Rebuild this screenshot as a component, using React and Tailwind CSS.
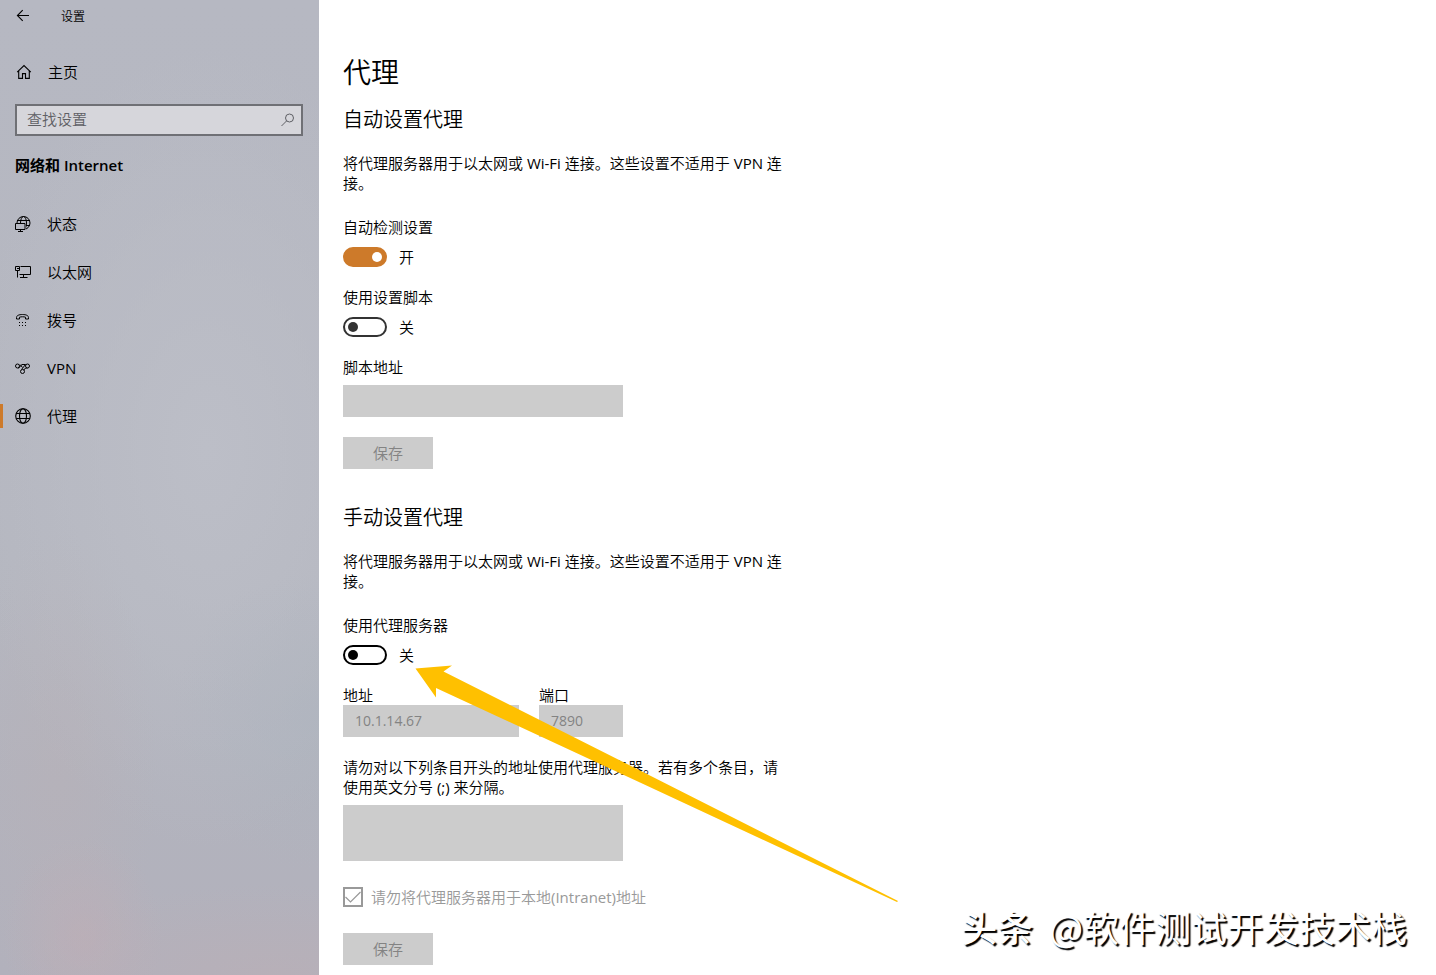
import React, { useState } from 'react';

const HomeIcon = () => (
  <svg className="h-4 w-4" viewBox="0 0 16 16" fill="none" stroke="currentColor" strokeWidth="1.1" aria-hidden="true">
    <path d="M1.2 8.2 8 1.6l6.8 6.6M2.7 7v7.4h3.8V9.6h3v4.8h3.8V7" />
  </svg>
);

const StatusIcon = () => (
  <svg className="h-4 w-4" viewBox="0 0 16 16" fill="none" stroke="currentColor" aria-hidden="true">
    <clipPath id="globe-part">
      <path d="M0 0h16v16h-5V7H0z" />
    </clipPath>
    <g clipPath="url(#globe-part)">
      <circle cx="8.5" cy="7" r="6.5" />
      <ellipse cx="8.5" cy="7" rx="3" ry="6.5" />
      <path d="M2 4.5h13M2 9.5h13" />
    </g>
    <path d="M.5 7.5h9.5v6H.5zM5.5 13.5v2M3 15.5h5" />
  </svg>
);

const EthernetIcon = () => (
  <svg className="h-4 w-4" viewBox="0 0 16 16" fill="none" stroke="currentColor" aria-hidden="true">
    <path d="M5.5 2.5h10v8h-11M.5 2.5h4v4h-4zM2.5 6.5v7M8.5 10.5v3M5 13.5h7.5" />
    <path d="M2 4.5h2" />
  </svg>
);

const DialUpIcon = () => (
  <svg className="h-4 w-4" viewBox="0 0 16 16" fill="none" stroke="currentColor" aria-hidden="true">
    <path d="M1.5 5.5c0-2 2.500-3 6-3s6 1 6 3v1.500h-3V5.200c-1.800-.6-4.200-.6-6 0V7h-3z" />
    <path d="M4 10.5h1M7 10.5h1M10 10.5h1M4 13.5h1M7 13.5h1M10 13.5h1" />
  </svg>
);

const VpnIcon = () => (
  <svg className="h-4 w-4" viewBox="0 0 16 16" fill="none" stroke="currentColor" aria-hidden="true">
    <circle cx="2.5" cy="6" r="2" />
    <circle cx="7.5" cy="11.5" r="2" />
    <circle cx="12.5" cy="6" r="2" />
    <path d="M3 8c2 .2 2.500-2.800 4-3.500h3.500l-4 5M5 4.500l2.500 3M9 10c.2-1.500 1.500-2 3.500-2" />
  </svg>
);

const GlobeIcon = () => (
  <svg className="h-4 w-4" viewBox="0 0 16 16" fill="none" stroke="currentColor" strokeWidth="1.1" aria-hidden="true">
    <circle cx="8" cy="8" r="7.3" />
    <ellipse cx="8" cy="8" rx="3.5" ry="7.3" />
    <path d="M1.2 5.5h13.6M1.2 10.5h13.6" />
  </svg>
);

const navItems = [
  { label: '状态', icon: StatusIcon },
  { label: '以太网', icon: EthernetIcon },
  { label: '拨号', icon: DialUpIcon },
  { label: 'VPN', icon: VpnIcon },
  { label: '代理', icon: GlobeIcon, active: true },
];

const Sidebar = () => (
  <aside className="w-[319px] shrink-0 bg-[#b6b8c2] bg-[radial-gradient(ellipse_80px_100px_at_26%_96%,#c0adb588,transparent),radial-gradient(ellipse_100px_240px_at_18%_79%,#bab0b566,transparent),radial-gradient(ellipse_260px_90px_at_85%_100%,#baafb6aa,transparent),radial-gradient(ellipse_150px_150px_at_100%_74%,#adb5bf88,transparent),radial-gradient(ellipse_240px_400px_at_65%_46%,#bcbec7,transparent),linear-gradient(to_bottom,#b6b8c2_0%,#b5b7c0_60%,#b2b3bd_80%,#b2b1bc_100%)]">
    <header className="flex h-[34px] items-center">
      <button aria-label="返回" className="flex h-8 w-12 items-center pl-4">
        <svg className="h-4 w-4" viewBox="0 0 16 16" fill="none" stroke="currentColor" strokeWidth="1.1" aria-hidden="true">
          <path d="M13 6.5H1.5M6.7 1.2 1.4 6.5l5.3 5.3" />
        </svg>
      </button>
      <span className="pl-[13px] text-xs">设置</span>
    </header>

    <a href="#home" className="mt-[14px] flex h-12 items-center gap-4 pl-4">
      <HomeIcon />
      主页
    </a>

    <label className="mt-2 mr-4 ml-[15px] flex h-8 items-center border-2 border-[#6f7075] bg-[#d6d6db] pr-[5px] pb-0.5 pl-2.5">
      <input type="text" aria-label="查找设置" placeholder="查找设置" className="min-w-0 flex-1 bg-transparent outline-none placeholder:text-[#5f6065]" />
      <svg className="h-4 w-4 text-[#5f6065]" viewBox="0 0 16 16" fill="none" stroke="currentColor" aria-hidden="true">
        <circle cx="9.5" cy="7" r="4" />
        <path d="M6.7 9.8 1.5 15" />
      </svg>
    </label>

    <h2 className="mt-[19px] pl-[15px] font-['Open_Sans','Noto_Sans_CJK_SC',sans-serif] leading-5 font-semibold">网络和 Internet</h2>

    <nav className="mt-[25px]">
      {navItems.map(({ label, icon: Icon, active }) => (
        <a key={label} href="#nav" aria-current={active ? 'page' : undefined} className="flex h-12 items-center">
          <span className={active ? 'h-6 w-[3px] bg-[#cd7a2a]' : 'h-6 w-[3px]'}></span>
          <span className="flex items-center gap-4 pl-3">
            <Icon />
            {label}
          </span>
        </a>
      ))}
    </nav>
  </aside>
);

const Toggle = ({ label, defaultOn = false, strong = false }) => {
  const [on, setOn] = useState(defaultOn);
  const offTrack = strong ? 'border-black' : 'border-[#333333]';
  const offKnob = strong ? 'bg-black' : 'bg-[#333333]';

  return (
    <label className="block">
      <span className="block">{label}</span>
      <span className="mt-2.5 flex items-center gap-3">
        <input type="checkbox" role="switch" className="sr-only" checked={on} onChange={() => setOn(!on)} />
        <span className={`flex h-5 w-11 items-center rounded-full border-2 px-[3px] ${on ? 'justify-end border-[#cd7a2a] bg-[#cd7a2a]' : offTrack}`}>
          <span className={`h-2.5 w-2.5 rounded-full ${on ? 'bg-white' : offKnob}`}></span>
        </span>
        <span>{on ? '开' : '关'}</span>
      </span>
    </label>
  );
};

const Description = () => (
  <p className="mt-[19px] max-w-[450px]">将代理服务器用于以太网或 Wi-Fi 连接。这些设置不适用于 VPN 连接。</p>
);

const SaveButton = () => (
  <button disabled className="block h-8 w-[90px] bg-[#cccccc] text-[#838383]">保存</button>
);

const Arrow = () => (
  <svg className="pointer-events-none absolute top-[660px] left-[410px] h-[250px] w-[500px]" viewBox="410 660 500 250" aria-hidden="true">
    <path d="M415.5 668.5 452 665.5 443.5 671.5 640 770.5 898 901 897 902 640 782.5 436 688V697.5z" fill="#ffc000" />
  </svg>
);

const App = () => {
  return (
    <div className="relative flex min-h-screen bg-white font-['Open_Sans','Noto_Sans_CJK_SC_DemiLight','Noto_Sans_CJK_SC',sans-serif] text-[15px] leading-5 text-black">
      <Sidebar />

      <main className="flex-1 px-6 pt-[54px] pb-2">
        <h1 className="text-[28px] leading-9">代理</h1>

        <section>
          <h2 className="mt-4 text-xl leading-7">自动设置代理</h2>
          <Description />
          <div className="mt-6 space-y-5">
            <Toggle label="自动检测设置" defaultOn />
            <Toggle label="使用设置脚本" />
            <div>
              <label htmlFor="script" className="block">脚本地址</label>
              <input id="script" type="text" disabled className="mt-2 block h-8 w-[280px] bg-[#cccccc] px-3" />
            </div>
            <SaveButton />
          </div>
        </section>

        <section>
          <h2 className="mt-[35px] text-xl leading-7">手动设置代理</h2>
          <Description />
          <div className="mt-6 space-y-5">
            <Toggle label="使用代理服务器" strong />
            <div className="flex gap-5">
              <div>
                <label htmlFor="address" className="block">地址</label>
                <input id="address" type="text" disabled defaultValue="10.1.14.67" className="block h-8 w-44 bg-[#cccccc] px-3 pb-0.5 text-sm text-[#838383]" />
              </div>
              <div>
                <label htmlFor="port" className="block">端口</label>
                <input id="port" type="text" disabled defaultValue="7890" className="block h-8 w-[84px] bg-[#cccccc] px-3 pb-0.5 text-sm text-[#838383]" />
              </div>
            </div>
            <div>
              <label htmlFor="exceptions" className="block max-w-[440px]">
                请勿对以下列条目开头的地址使用代理服务器。若有多个条目，请使用英文分号 (;) 来分隔。
              </label>
              <textarea id="exceptions" disabled className="mt-2 block h-14 w-[280px] resize-none bg-[#cccccc] px-3"></textarea>
            </div>
          </div>

          <label className="mt-[26px] flex items-center gap-2 text-[#999999]">
            <span className="grid h-5 w-5">
              <input type="checkbox" disabled defaultChecked className="col-start-1 row-start-1 h-5 w-5 appearance-none border-2 border-[#999999]" />
              <svg className="col-start-1 row-start-1 h-5 w-5" viewBox="0 0 20 20" fill="none" stroke="currentColor" strokeWidth="1.2" aria-hidden="true">
                <path d="M2.5 10 7.5 15 17.5 5" />
              </svg>
            </span>
            请勿将代理服务器用于本地(Intranet)地址
          </label>
          <div className="mt-[26px]">
            <SaveButton />
          </div>
        </section>
      </main>

      <Arrow />
      <div className="absolute right-[29px] bottom-[25px] flex gap-4 font-['Noto_Sans_CJK_SC',sans-serif] text-4xl leading-[48px] whitespace-nowrap text-white [text-shadow:2px_2px_1px_#000000]">
        <span className="font-medium">头条</span>
        <span>@软件测试开发技术栈</span>
      </div>
    </div>
  );
};

export default App;
